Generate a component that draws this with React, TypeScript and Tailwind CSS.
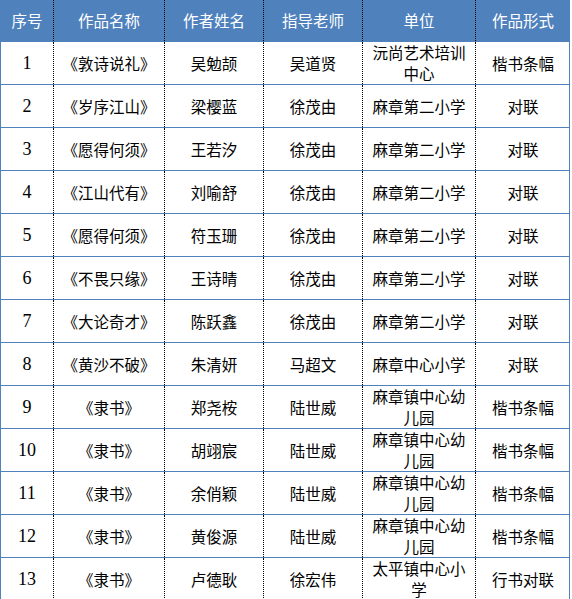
import React from 'react';

type Row = [string, string, string, string, string, string];

const HEADERS = ['序号', '作品名称', '作者姓名', '指导老师', '单位', '作品形式'];

const ROWS: Row[] = [
  ['1', '《敦诗说礼》', '吴勉颉', '吴道贤', '沅尚艺术培训中心', '楷书条幅'],
  ['2', '《岁序江山》', '梁樱蓝', '徐茂由', '麻章第二小学', '对联'],
  ['3', '《愿得何须》', '王若汐', '徐茂由', '麻章第二小学', '对联'],
  ['4', '《江山代有》', '刘喻舒', '徐茂由', '麻章第二小学', '对联'],
  ['5', '《愿得何须》', '符玉珊', '徐茂由', '麻章第二小学', '对联'],
  ['6', '《不畏只缘》', '王诗晴', '徐茂由', '麻章第二小学', '对联'],
  ['7', '《大论奇才》', '陈跃鑫', '徐茂由', '麻章第二小学', '对联'],
  ['8', '《黄沙不破》', '朱清妍', '马超文', '麻章中心小学', '对联'],
  ['9', '《隶书》', '郑尧桉', '陆世威', '麻章镇中心幼儿园', '楷书条幅'],
  ['10', '《隶书》', '胡翊宸', '陆世威', '麻章镇中心幼儿园', '楷书条幅'],
  ['11', '《隶书》', '余俏颖', '陆世威', '麻章镇中心幼儿园', '楷书条幅'],
  ['12', '《隶书》', '黄俊源', '陆世威', '麻章镇中心幼儿园', '楷书条幅'],
  ['13', '《隶书》', '卢德耿', '徐宏伟', '太平镇中心小学', '行书对联'],
];

const cols = 'grid grid-cols-[53px_111px_99px_99px_113px_94px]';
const cell = 'flex items-center justify-center text-center px-[3px] border-r border-dotted border-black';

export default function App() {
  return (
    <div className="w-[572px] h-[599px] overflow-hidden bg-white text-[15.5px] leading-[21px] text-black [font-family:'Noto_Sans_CJK_SC',sans-serif]">
      <div className="w-[570px] border-x border-[#4f81bd]">
        <div className={`${cols} h-[41px] bg-[#4f81bd] text-white`}>
          {HEADERS.map((h, i) => (
            <div key={h} className={i === 5 ? 'flex items-center justify-center' : cell}>
              {h}
            </div>
          ))}
        </div>
        {ROWS.map((r) => (
          <div key={r[0]} className={`${cols} h-[43px] border-t border-[#4f81bd]`}>
            <div className={`${cell} text-[18px] [font-family:'Liberation_Serif',serif]`}>{r[0]}</div>
            <div className={cell}>{r[1]}</div>
            <div className={cell}>{r[2]}</div>
            <div className={cell}>{r[3]}</div>
            <div className={cell}>{r[4]}</div>
            <div className="flex items-center justify-center text-center px-[3px]">{r[5]}</div>
          </div>
        ))}
      </div>
    </div>
  );
}
